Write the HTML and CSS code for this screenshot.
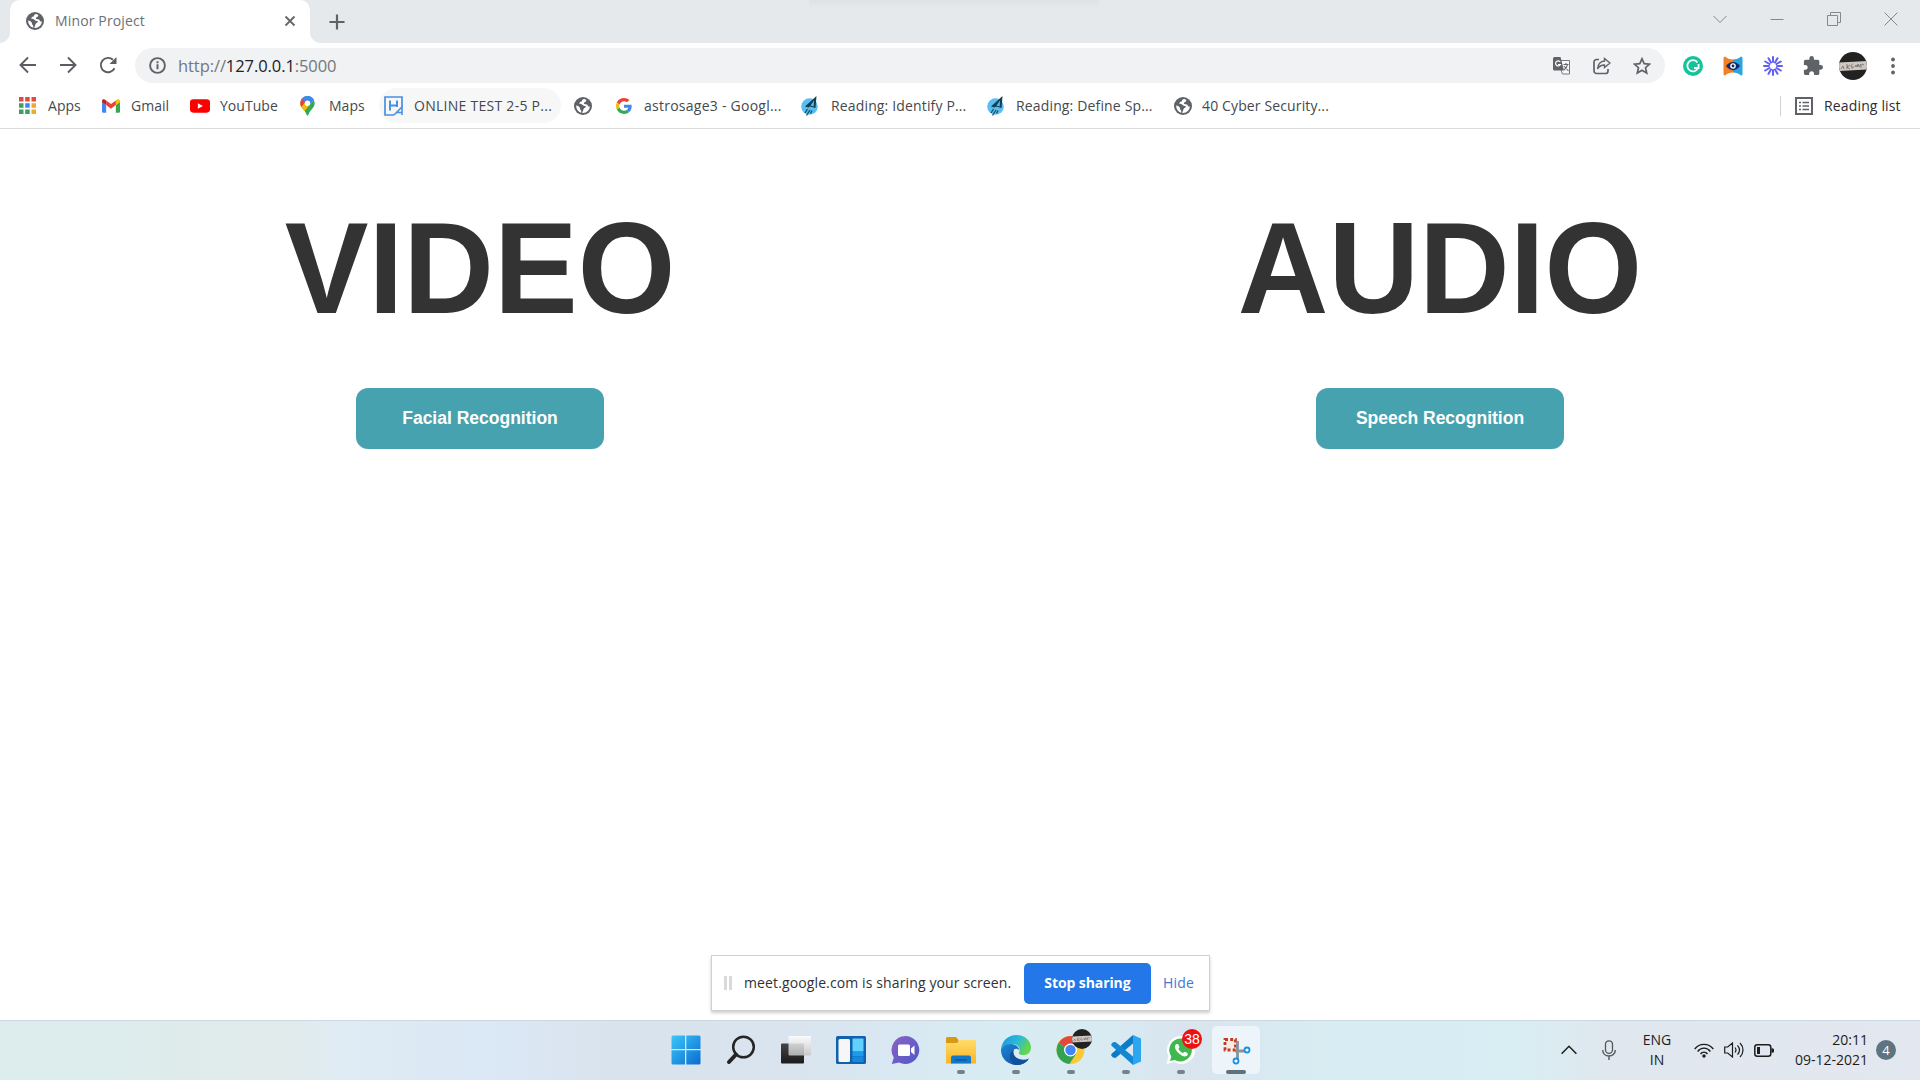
FILE: index.html
```html
<!DOCTYPE html>
<html lang="en">
<head>
<meta charset="utf-8">
<title>Minor Project</title>
<link rel="stylesheet" href="styles.css">
</head>
<body>
<svg width="0" height="0" class="defs">
  <defs>
    <symbol id="globe" viewBox="0 0 18 18">
      <circle cx="9" cy="9" r="9" fill="#5f6368"/>
      <path d="M10.3 1.9c-2 .2-2.500 1.500-2.400 2.700-1.500-.2-2.600.7-2.500 2.200 1.200.3 2.600.2 3.300 1.200.7 1 1.700.9 2.600 1.100.8.2.6 1.500-.4 1.700-1.500.3-1.200 1.700-2 3.200l-.7 1.900c4 .6 7.500-2.500 7.700-6.600-.9.600-1.900.1-2.200-.8-.4-1.200-1.300-1.300-2.500-1.300-1.500 0-1.800-1.600-.6-2 1-.3 1.600-1.100 1.800-2.200zM2.200 8.600c-.2 3.500 2 6.300 5 7.200.2-1.200.3-2.200-.7-3-.8-.6-.3-1.700-.8-2.400-.8-1-2.200-1.600-3.500-1.800z" fill="#fff"/>
    </symbol>
    <symbol id="rocket" viewBox="0 0 18 20">
      <circle cx="8.500" cy="10.500" r="8.300" fill="#5bbdf0"/>
      <path d="M15.500 0 4 10.500l3.500 1 1.500-1 5.500 1.500z" fill="#123f52"/>
      <path d="m13 4.500-3.500 5 3.200 1z" fill="#5bbdf0"/>
      <path d="m6.500 13-2.500 4M9 14l-3.500 5.500M11 14.500l-1.500 3" stroke="#16506a" stroke-width="1.300"/>
    </symbol>
    <linearGradient id="win" x2="1" y2="1"><stop stop-color="#3cc6f8"/><stop offset="1" stop-color="#0a6ccf"/></linearGradient>
    <linearGradient id="sheet" x2="0" y2="1"><stop stop-color="#fff"/><stop offset="1" stop-color="#c5c5c5"/></linearGradient>
    <linearGradient id="dark" x2="0" y2="1"><stop stop-color="#444"/><stop offset="1" stop-color="#1b1b1b"/></linearGradient>
    <linearGradient id="chat" x2="1" y2="1"><stop stop-color="#8a63c5"/><stop offset="1" stop-color="#5058c8"/></linearGradient>
    <linearGradient id="folder" x2="0" y2="1"><stop stop-color="#ffdc68"/><stop offset="1" stop-color="#f9b526"/></linearGradient>
    <linearGradient id="edgeTop" x2="1" y2=".4"><stop stop-color="#1b95d8"/><stop offset=".55" stop-color="#27b8df"/><stop offset="1" stop-color="#64d64b"/></linearGradient>
    <linearGradient id="edgeLow" x2="1" y2="1"><stop stop-color="#1a88da"/><stop offset="1" stop-color="#114a93"/></linearGradient>
    <clipPath id="avatarClip"><circle cx="14" cy="14" r="14"/></clipPath>
    <symbol id="avatar" viewBox="0 0 28 28">
      <g clip-path="url(#avatarClip)">
        <rect width="28" height="28" fill="#222"/>
        <path d="M0 10.500 28 9v8.500L0 19z" fill="#cfc8c2"/>
        <path d="m2 17 2-3 1 3m3-5v5m0-2 3-2m-3 2 3 2m3-5c-2 0-3 4 0 4v-2m2 1 1-2 1 2 1-3 1 3 2-3v4m1-4 2 1" stroke="#625b57" fill="none" stroke-width=".7"/>
      </g>
    </symbol>
  </defs>
</svg>

<header class="tabstrip">
  <div class="tab">
    <svg class="fav" width="18" height="18"><use href="#globe"/></svg>
    <span class="tab-title">Minor Project</span>
    <svg width="12" height="12" viewBox="0 0 12 12"><path d="m1.500 1.500 9 9m0-9-9 9" stroke="#65686c" stroke-width="1.900"/></svg>
  </div>
  <svg class="newtab" width="16" height="16" viewBox="0 0 16 16"><path d="M8 .5v15M.5 8h15" stroke="#5f6266" stroke-width="2.200"/></svg>
  <div class="strip-glow"></div>
  <div class="win-controls">
    <svg viewBox="0 0 14 14"><path d="m.5 4 6.500 6.500L13.500 4"/></svg>
    <svg viewBox="0 0 14 14"><path d="M.5 7.500h13"/></svg>
    <svg viewBox="0 0 14 14"><path d="M.5 3.500h10v10H.5zM3.500 3V.5h10v10H11"/></svg>
    <svg viewBox="0 0 14 14"><path d="m.5.5 13 13m0-13-13 13"/></svg>
  </div>
</header>

<div class="toolbar">
  <div class="nav">
    <svg width="18" height="18" viewBox="0 0 18 18"><path d="M17 9H2m7-7.500L1.500 9 9 16.500"/></svg>
    <svg width="18" height="18" viewBox="0 0 18 18"><path d="M1 9h15M9 1.500 16.500 9 9 16.500"/></svg>
    <svg width="18" height="18" viewBox="0 0 18 18"><path d="M15.500 12.300A7.200 7.200 0 1 1 14 3.800"/><path d="M17.500 1v7h-7z" fill="#5a5d61" stroke="none"/></svg>
  </div>
  <div class="omnibox">
    <svg width="17" height="17" viewBox="0 0 17 17"><circle cx="8.500" cy="8.500" r="7.400" fill="none" stroke="#5f6368" stroke-width="1.900"/><path d="M8.500 7.300v5M8.500 4.300v1.900" stroke="#5f6368" stroke-width="2"/></svg>
    <span class="url">http://<b>127.0.0.1</b>:5000</span>
    <div class="omni-actions">
      <svg width="18" height="18" viewBox="0 0 18 18"><path d="M8 3.500h8.500v13.500H9.500L8 13" fill="#f7f8f9" stroke="#77797d"/><path d="M1.500 0h6L11 13.500H1.500A1.500 1.500 0 0 1 0 12V1.500A1.500 1.500 0 0 1 1.500 0z" fill="#5f6368"/><path d="M7.200 5A2.500 2.500 0 1 0 7.400 7.500H5" fill="none" stroke="#fff" stroke-width="1.200"/><path d="M10.500 7.500h5M13 6v1.500m1.500 0c-.5 3-2 4.500-3.500 5.500m0-4 4.500 5" fill="none" stroke="#666" stroke-width="1.100"/></svg>
      <svg width="18" height="18" viewBox="0 0 18 18" fill="none" stroke="#5f6368" stroke-width="1.700"><path d="M6 2.500H3.500A2.500 2.500 0 0 0 1 5v9a2.500 2.500 0 0 0 2.500 2.500h9A2.500 2.500 0 0 0 15 14v-2"/><path d="M11.500 1.500 17 6l-5.500 4.500V8C8 8 6 9.500 4.500 12 5 7 7.500 4.300 11.500 4z" stroke-width="1.400"/></svg>
      <svg width="18" height="18" viewBox="0 0 18 18"><path d="m9 1.800 2.200 4.900 5.300.5-4 3.500 1.200 5.300L9 13.200 4.300 16l1.200-5.300-4-3.500 5.300-.5z" fill="none" stroke="#5f6368" stroke-width="1.700"/></svg>
    </div>
  </div>
  <div class="extensions">
    <svg width="20" height="20" viewBox="0 0 20 20"><circle cx="10" cy="10" r="10" fill="#15c39a"/><path d="M14.500 6.500a5.600 5.600 0 1 0 .7 5.300M15.600 8v4h-4.600" fill="none" stroke="#fff" stroke-width="1.800"/></svg>
    <svg width="20" height="20" viewBox="0 0 20 20"><path d="M10 3.500C13 3.500 16 2.500 18 .5q1.500 0 1.500 1.500v16q0 1.500-1.500 1.500c-2-2-5-3-8-3z" fill="#2aa5e0"/><path d="M10 3.500C7 3.500 4 2.500 2 .5Q.5.500.5 2v16q0 1.500 1.500 1.500c2-2 5-3 8-3z" fill="#f48024"/><path d="M3 10c4-5.500 10-5.500 14 0-4 5.500-10 5.500-14 0z" fill="#14296b"/><circle cx="10" cy="10" r="2.800" fill="#fff"/><circle cx="10" cy="10" r="1.400" fill="#14296b"/></svg>
    <svg width="20" height="20" viewBox="-10 -10 20 20" stroke="#625df5" stroke-width="2" stroke-linecap="round"><path d="M0-4v-5M0 4v5M-4 0h-5M4 0h5M2-3.500l2.500-4.300M-2-3.500l-2.500-4.300M2 3.500l2.500 4.300M-2 3.500l-2.500 4.300M3.500-2l4.300-2.500M-3.500-2l-4.300-2.500M3.500 2l4.300 2.500M-3.500 2l-4.300 2.500"/></svg>
    <svg width="20" height="20" viewBox="1 1 22 22" fill="#5f6368"><path d="M20.500 11H19V7c0-1.100-.9-2-2-2h-4V3.500a2.500 2.500 0 0 0-5 0V5H4c-1.100 0-2 .9-2 2v3.800h1.500c1.500 0 2.700 1.200 2.700 2.700S5 16.200 3.500 16.200H2V20c0 1.100.9 2 2 2h3.800v-1.500c0-1.500 1.200-2.700 2.700-2.700s2.700 1.200 2.700 2.700V22H17c1.100 0 2-.9 2-2v-4h1.500a2.500 2.500 0 0 0 0-5z"/></svg>
    <svg class="avatar" width="28" height="28"><use href="#avatar"/></svg>
    <svg width="4" height="18" viewBox="0 0 4 18" fill="#5f6368"><circle cx="2" cy="2.500" r="1.900"/><circle cx="2" cy="9" r="1.900"/><circle cx="2" cy="15.500" r="1.900"/></svg>
  </div>
</div>

<nav class="bookmarks">
  <a class="bm apps"><svg width="17" height="17" viewBox="0 0 17 17"><path d="M0 0h4.500v4.500H0zM6.200 0h4.500v4.500H6.200zM12.500 0H17v4.500h-4.500z" fill="#e04a3f"/><path d="M0 6.200h4.500v4.500H0zM0 12.500h4.500V17H0zM6.200 12.500h4.500V17H6.200z" fill="#3f9f5c"/><path d="M6.200 6.200h4.500v4.500H6.200z" fill="#3b87ea"/><path d="M12.500 6.200H17v4.500h-4.500zM12.500 12.500H17V17h-4.500z" fill="#f1a92c"/></svg><span>Apps</span></a>
  <a class="bm gmail"><svg width="18" height="14" viewBox="0 0 19 14"><path d="M0 2.500 4.400 6v8H1.300A1.300 1.300 0 0 1 0 12.700z" fill="#4285f4"/><path d="M19 2.500 14.600 6v8h3.100a1.300 1.300 0 0 0 1.300-1.300z" fill="#34a853"/><path d="M14.600 1.200V6L19 3V1.800C19 0 17-.6 15.600.5z" fill="#fbbc04"/><path d="M4.400 6V1.200L9.500 5l5.100-3.800V6L9.500 9.900z" fill="#ea4335"/><path d="M0 1.800V3l4.400 3V1.200L3.400.5C2-.6 0 0 0 1.800z" fill="#c5221f"/></svg><span>Gmail</span></a>
  <a class="bm youtube"><svg width="20" height="14" viewBox="0 0 21 14"><rect width="21" height="14" rx="3.500" fill="#f00"/><path d="m8.300 4 5.200 3-5.200 3z" fill="#fff"/></svg><span>YouTube</span></a>
  <a class="bm maps"><svg width="15" height="20" viewBox="0 0 15 20"><path d="M7.500 0A7.200 7.200 0 0 0 .3 7.200c0 4.500 4.500 6.300 6.200 11.300.4 1.500 1.600 1.500 2 0 1.700-5 6.200-6.800 6.200-11.300A7.200 7.200 0 0 0 7.500 0z" fill="#34a853"/><path d="M1.500 11C.8 10 .3 8.800.3 7.200L11.500 4l2.300 0-9.300 11C3.500 13.500 2.300 12.300 1.500 11z" fill="#fbbc04"/><path d="M.3 7.200c0-1.700.6-3.300 1.600-4.500l3.600 3L1.400 11A7 7 0 0 1 .3 7.200z" fill="#ea4335"/><path d="M1.900 2.700A7.200 7.200 0 0 1 13.800 3.700L9.500 8.800 5.500 5.700z" fill="#4285f4"/><circle cx="7.500" cy="7.200" r="2.700" fill="#fff"/></svg><span>Maps</span></a>
  <a class="bm online"><svg width="19" height="20" viewBox="0 0 19 20" fill="none" stroke="#4a90e2"><path d="M18 11V1H1v18h9" stroke-width="1.700"/><path d="M6 4.500v10M13 4.500V11M6 9.500h7" stroke-width="2"/><path d="m10 19 8-8v8M12.500 16.500H18" stroke-width="1.600"/></svg><span>ONLINE TEST 2-5 P...</span></a>
  <a class="bm blank"><svg width="18" height="18"><use href="#globe"/></svg></a>
  <a class="bm astro"><svg width="16" height="16" viewBox="0 0 48 48"><path fill="#ea4335" d="M24 9.500c3.500 0 6.700 1.200 9.200 3.600l6.900-6.900C35.900 2.400 30.500 0 24 0 14.600 0 6.500 5.400 2.600 13.200l8 6.200C12.400 13.700 17.700 9.500 24 9.500z"/><path fill="#4285f4" d="M47 24.600c0-1.600-.2-3.100-.4-4.600H24v9h12.900c-.6 3-2.300 5.500-4.800 7.200l7.700 6C44.400 38 47 31.800 47 24.600z"/><path fill="#fbbc05" d="M10.500 28.600a14.500 14.500 0 0 1 0-9.200l-8-6.200a24 24 0 0 0 0 21.600z"/><path fill="#34a853" d="M24 48c6.500 0 11.900-2.100 15.900-5.800l-7.700-6c-2.200 1.500-4.900 2.300-8.200 2.300-6.300 0-11.600-4.200-13.500-9.900l-8 6.200C6.500 42.600 14.600 48 24 48z"/></svg><span>astrosage3 - Googl...</span></a>
  <a class="bm identify"><svg width="18" height="20"><use href="#rocket"/></svg><span>Reading: Identify P...</span></a>
  <a class="bm define"><svg width="18" height="20"><use href="#rocket"/></svg><span>Reading: Define Sp...</span></a>
  <a class="bm cyber"><svg width="18" height="18"><use href="#globe"/></svg><span>40 Cyber Security...</span></a>
  <a class="bm reading-list"><svg width="18" height="18" viewBox="0 0 18 18"><path d="M1 1h16v16H1z" fill="none" stroke="#5f6368" stroke-width="2"/><path d="M4 5.500h2M4 9h2M4 12.500h2M7.500 5.500H14M7.500 9H14M7.500 12.500H14" stroke="#5f6368" stroke-width="1.700"/></svg><span>Reading list</span></a>
</nav>

<main class="page">
  <section class="column">
    <h1>VIDEO</h1>
    <button>Facial Recognition</button>
  </section>
  <section class="column">
    <h1>AUDIO</h1>
    <button>Speech Recognition</button>
  </section>
</main>

<aside class="share">
  <span class="grip"></span>
  <span class="share-text">meet.google.com is sharing your screen.</span>
  <span class="stop">Stop sharing</span>
  <span class="hide">Hide</span>
</aside>

<footer class="taskbar">
  <div class="launchers">
    <div class="app"><svg width="30" height="30" viewBox="0 0 30 30"><path d="M2 .5h12v13.500H.5V2A1.500 1.500 0 0 1 2 .5zM15.300.5H28A1.500 1.500 0 0 1 29.500 2v12H15.300zM.5 15.300H14v14.200H2A1.500 1.500 0 0 1 .5 28zM15.300 15.300h14.200V28a1.500 1.500 0 0 1-1.500 1.500H15.300z" fill="url(#win)"/></svg></div>
    <div class="app"><svg width="30" height="30" viewBox="0 0 30 30" fill="none" stroke="#252525"><circle cx="17.500" cy="12" r="10.300" stroke-width="2.500"/><path d="m10 19.500-7 7.500" stroke-width="4" stroke-linecap="round"/></svg></div>
    <div class="app"><svg width="30" height="30" viewBox="0 0 30 30"><rect y="8.500" width="23" height="20" rx="1" fill="url(#dark)"/><rect x="7.500" y="1" width="22.500" height="19.500" rx="1" fill="url(#sheet)" fill-opacity=".85"/></svg></div>
    <div class="app"><svg width="30" height="30" viewBox="0 0 30 30"><rect y="1" width="30" height="28" rx="1.500" fill="#1261ae"/><rect x="2.500" y="4" width="11.500" height="23" rx="1.500" fill="#f6f6f6"/><path d="M16.500 3.500h11v13h-11z" fill="#61d0fa"/><path d="M16.500 17h11v4.500h-11z" fill="#1c9bea"/><path d="M16.500 22h11v5h-11z" fill="#118be0"/></svg></div>
    <div class="app"><svg width="30" height="30" viewBox="0 0 30 30"><path d="M15 1a14 14 0 1 1-7 26.500L.8 29l2-6.500A14 14 0 0 1 15 1z" fill="url(#chat)"/><rect x="7" y="9.500" width="12" height="11.500" rx="1.500" fill="#fff"/><path d="m20 13.500 3.500-3v9.500l-3.500-3z" fill="#fff"/></svg></div>
    <div class="app running"><svg width="30" height="30" viewBox="0 0 30 30"><path d="M0 3.500A1.500 1.500 0 0 1 1.500 2H10l2.500 3v4H0z" fill="#d89a12"/><path d="M0 8h11l3-3h14.500A1.500 1.500 0 0 1 30 6.500V28.500H0z" fill="url(#folder)"/><path d="M5 28.500v-6A2 2 0 0 1 7 20.500h16a2 2 0 0 1 2 2v6z" fill="#1478c8"/><path d="M9 25h12" stroke="#0d569e" stroke-width="1.500"/></svg></div>
    <div class="app running"><svg width="30" height="30" viewBox="0 0 30 30"><path d="M0 14C1 5.500 7.500 0 15.500 0 24 0 30 6 30 12.500c0 5-3.500 7.500-7.500 7.500-3 0-5-1-4.500-2.200C19.500 15 18 9 11 9 6 9 2 11 0 14z" fill="url(#edgeTop)"/><path d="M0 14c2-3.500 6-5.500 10.500-5 5 .5 7.500 3.500 7.500 6-1.500-1.500-3.500-1.500-5-.5-4 3-1.500 13 8 12.500 3-.2 5-1.500 6.500-3C25 28 20.500 30 15.500 30 6.500 30-.5 23 0 14z" fill="url(#edgeLow)"/><path d="M13 14.500c-6 3.500-5.500 11.500 1 15.400C20 30.500 25 28 28 23.500c-7 3.500-18-.5-15-9z" fill="#11509a"/></svg></div>
    <div class="app running"><svg width="36" height="36" viewBox="0 0 36 36" class="wide"><circle cx="14.500" cy="21" r="14" fill="#fbc934"/><path d="M14.500 21 2.400 14a14 14 0 0 1 24.200 0z" fill="#e3483c"/><path d="M2.400 14a14 14 0 0 0 11 21L20 25l-5.500-4z" fill="#32a350"/><circle cx="14.500" cy="21" r="6.500" fill="#fff"/><circle cx="14.500" cy="21" r="5.200" fill="#4285f4"/><use href="#avatar" x="16" y="0" width="20" height="20"/></svg></div>
    <div class="app running"><svg width="30" height="30" viewBox="0 0 30 30"><path d="M22 0v8.500L4.500 23 2 22.500.3 20.800V19z" fill="#0b7bc8"/><path d="M.3 10.500V9L2 7.300 4.500 7 22 21.500V30L.3 10.500z" fill="#1287d6"/><path d="m22 0 8 3.500v23L22 30z" fill="#2ba6f0"/></svg></div>
    <div class="app running"><svg width="36" height="36" viewBox="0 0 36 36" class="wide"><path d="M14.500 7a14 14 0 1 1-6.500 26L.5 35l2-7.500A14 14 0 0 1 14.500 7z" fill="#fff"/><path d="M14.500 9.500a11.500 11.500 0 1 1-5.800 21.500L4 32l1.300-4.500a11.500 11.500 0 0 1 9.200-18z" fill="#3fb94e"/><path d="M10.500 15c-3 2-1 6.500 2.500 9.500s7 4 8.500 1.500c.8-1.500 0-2-2.700-3.200-1 .2-1.300 1.500-2 1.200-2-.8-3.500-2.500-4.300-4 .2-.8 1.200-1.200.9-2-.7-2.200-1-3.400-2.900-3z" fill="#fff"/></svg><span class="count">38</span></div>
    <div class="app running active"><svg width="30" height="30" viewBox="0 0 30 30"><path d="M4 4.500h10.500v10.500H4z" fill="#f7ebe8" stroke="#c53c1c" stroke-width="2.800" stroke-dasharray="3 2.200"/><path d="M16.500 6v18M14 16h10" stroke="#8b9298" stroke-width="2.800"/><circle cx="15" cy="26" r="2.500" fill="#fff" stroke="#1593dc" stroke-width="1.800"/><circle cx="26" cy="15" r="2.500" fill="#fff" stroke="#1593dc" stroke-width="1.800"/></svg></div>
  </div>
  <div class="tray">
    <svg width="16" height="10" viewBox="0 0 16 10"><path d="M.6 8.800 8 1.300l7.400 7.500" stroke-width="1.500"/></svg>
    <svg class="mic" width="14" height="20" viewBox="0 0 14 20"><rect x="3.500" y=".8" width="7" height="12.500" rx="3.500" stroke-width="1.300"/><path d="M.7 10c0 8 12.600 8 12.600 0M7 16v4" stroke-width="1.400"/></svg>
    <div class="lang">ENG<br>IN</div>
    <div class="status">
      <svg width="20" height="15" viewBox="0 0 20 15" stroke-width="1.400"><path d="M.7 6C5.500-.2 14.500-.2 19.300 6M3.600 8.500c3.400-4.500 9.400-4.500 12.800 0M6.500 11c1.800-2.500 5.200-2.500 7 0"/><circle cx="10" cy="13" r="1.700" fill="#1d1d1d" stroke="none"/></svg>
      <svg width="20" height="16" viewBox="0 0 20 16" stroke-width="1.200"><path d="M.7 5v6h3L8.500 15V1L3.700 5zM11 5.500c1.200 1.500 1.200 3.500 0 5M13.500 3.300c2.400 2.800 2.400 6.600 0 9.400M16 1c4 4 4 10 0 14"/></svg>
      <svg width="20" height="13" viewBox="0 0 20 13"><rect x=".8" y=".8" width="16" height="11.400" rx="2.500" stroke-width="1.500"/><path d="M3 3h3v7H3zM17.500 4.300h1a1.500 1.500 0 0 1 1.500 1.500v1.400a1.500 1.500 0 0 1-1.500 1.500h-1z" fill="#1d1d1d" stroke="none"/></svg>
    </div>
    <div class="clock">20:11<br>09-12-2021</div>
    <span class="notice">4</span>
  </div>
</footer>
</body>
</html>
```
FILE: styles.css
```css
* { box-sizing: border-box; }
body {
  margin: 0;
  width: 1920px;
  height: 1080px;
  overflow: hidden;
  display: flex;
  flex-direction: column;
  background: #fff;
  font: 14px/20px "Open Sans", "Noto Sans", sans-serif;
  color: #45494d;
}
svg { display: block; flex: none; }
.defs { position: absolute; }

.tabstrip {
  position: relative;
  height: 43px;
  flex: none;
  display: flex;
  align-items: center;
  background: #e5e9ec;
}
.tab {
  position: relative;
  width: 300px;
  height: 43px;
  margin-left: 10px;
  padding: 0 14px 1px 16px;
  display: flex;
  align-items: center;
  background: #fff;
  border-radius: 10px 10px 0 0;
}
.tab::before, .tab::after {
  content: "";
  position: absolute;
  bottom: 0;
  width: 10px;
  height: 10px;
}
.tab::before { left: -10px; background: radial-gradient(circle at 0 0, transparent 9.500px, #fff 10px); }
.tab::after { right: -10px; background: radial-gradient(circle at 100% 0, transparent 9.500px, #fff 10px); }
.tab-title { flex: 1; margin-left: 11px; color: #6c7074; letter-spacing: .14px; }
.newtab { margin-left: 19px; }
.strip-glow { width: 290px; height: 8px; margin-left: 464px; align-self: flex-start; background: linear-gradient(#dee2e5, #e5e9ec); }
.win-controls { margin-left: auto; padding: 0 22px 6px 0; display: flex; gap: 43px; }
.win-controls svg { width: 14px; height: 14px; fill: none; stroke: #85898c; stroke-width: 1; }

.toolbar { height: 45px; flex: none; display: flex; align-items: center; }
.nav { width: 135px; padding: 0 0 1px 19px; display: flex; gap: 22px; fill: none; stroke: #5a5d61; stroke-width: 1.900; }
.omnibox {
  width: 1530px;
  height: 35px;
  padding: 0 14px 0 14px;
  display: flex;
  align-items: center;
  border-radius: 18px;
  background: #f0f2f4;
}
.url { margin-left: 12px; font-size: 16.500px; color: #73777b; letter-spacing: -.08px; }
.url b { font-weight: 400; color: #202124; }
.omni-actions { margin-left: auto; display: flex; gap: 22px; }
.extensions { flex: 1; padding: 0 25px 0 18px; display: flex; align-items: center; gap: 20px; }
.extensions .avatar { margin: 0 4px 0 -4px; }

.bookmarks {
  height: 41px;
  flex: none;
  display: grid;
  grid-template-columns: 83px 88px 110px 79px 195px 42px 185px 186px 187px 606px auto;
  align-items: start;
  padding-left: 19px;
  border-bottom: 1px solid #dadce0;
}
.bm { display: flex; align-items: center; height: 35px; gap: 12px; white-space: nowrap; letter-spacing: .03px; }
.gmail, .youtube { gap: 10px; }
.gmail { gap: 11px; }
.maps { gap: 14px; }
.online { width: 182px; padding-left: 5px; gap: 11px; border-radius: 18px; background: #f7f7f8; letter-spacing: .27px; }
.astro { letter-spacing: .25px; }
.identify { letter-spacing: .15px; }
.define { gap: 11px; letter-spacing: .15px; }
.cyber { gap: 10px; letter-spacing: .13px; }
.reading-list { height: 20px; margin-top: 8px; padding: 0 0 0 14px; gap: 11px; border-left: 1px solid #cfd1d4; color: #2b2d30; letter-spacing: .15px; }

.page { flex: 1; display: grid; grid-template-columns: 1fr 1fr; padding-top: 66px; }
.column { display: flex; flex-direction: column; align-items: center; }
h1 {
  margin: 0;
  height: 193px;
  font: bold 125.500px/145px "Liberation Sans", Arial, sans-serif;
  color: #333;
  transform: scaleY(1.042);
  transform-origin: 0 72px;
}
button {
  width: 248px;
  height: 61px;
  padding: 0;
  border: 0;
  border-radius: 12px;
  background: #46a2af;
  color: #fff;
  font: bold 17.500px "Liberation Sans", Arial, sans-serif;
}

.share {
  flex: none;
  width: 499px;
  height: 56px;
  margin: 0 0 9px 711px;
  padding: 0 15px 0 12px;
  display: flex;
  align-items: center;
  border: 1px solid #d0d1d3;
  background: #fff;
  box-shadow: 0 2px 3px #0003;
  color: #303235;
}
.grip { width: 8px; height: 14px; border: solid #dadada; border-width: 0 3px; }
.share-text { width: 280px; margin-left: 12px; white-space: nowrap; letter-spacing: .12px; }
.stop { width: 127px; height: 41px; line-height: 40px; text-align: center; border-radius: 5px; background: #2377e8; color: #fff; font-weight: 700; letter-spacing: -.1px; }
.hide { margin-left: 12px; color: #4377d3; letter-spacing: .2px; }

.taskbar {
  flex: none;
  height: 60px;
  padding-bottom: 1px;
  display: flex;
  align-items: center;
  border-top: 1px solid #cbd8e1;
  background: linear-gradient(90deg, #ddecec 0, #ddecec 110px, #e2ebeb 280px, #dfecf4 345px, #dbe8f5 480px, #d9e3ee 620px, #d9e4ef 800px, #d8ecf4 1000px, #d8ebf3 1100px, #d9e4ef 1180px, #d8edf3 1330px, #d9eef3 1520px, #e0e7ef 1610px, #e3e8f0 1920px);
}
.launchers { margin-left: 658px; display: flex; }
.app { position: relative; width: 55px; height: 48px; display: flex; align-items: center; justify-content: center; }
.wide { margin: -6px -3px 0 3px; }
.running::after {
  content: "";
  position: absolute;
  bottom: 0;
  left: 24px;
  width: 8px;
  height: 4px;
  border-radius: 2px;
  background: #75828b;
}
.active::before { content: ""; position: absolute; inset: 0 3px 0 4px; border-radius: 5px; background: #edf4fa; }
.active svg { position: relative; }
.active::after { left: 18px; width: 20px; background: #5e717d; }
.count {
  position: absolute;
  left: 29px;
  top: 3px;
  width: 20px;
  height: 20px;
  border-radius: 50%;
  background: #ee1111;
  color: #fff;
  font: 14px/20px "Liberation Sans", Arial, sans-serif;
  text-align: center;
}
.tray { flex: 1; padding-left: 298px; display: flex; align-items: center; color: #1d1d1d; }
.tray svg { fill: none; stroke: #1d1d1d; }
.tray .mic { margin-left: 25px; stroke: #53585e; }
.lang { width: 40px; margin-left: 21px; text-align: center; }
.status { display: flex; align-items: center; gap: 10px; margin-left: 17px; }
.clock { width: 80px; margin-left: 14px; text-align: right; }
.notice { width: 20px; height: 20px; margin-left: 8px; border-radius: 50%; background: #5f7481; color: #fff; text-align: center; font-size: 13px; }
```
